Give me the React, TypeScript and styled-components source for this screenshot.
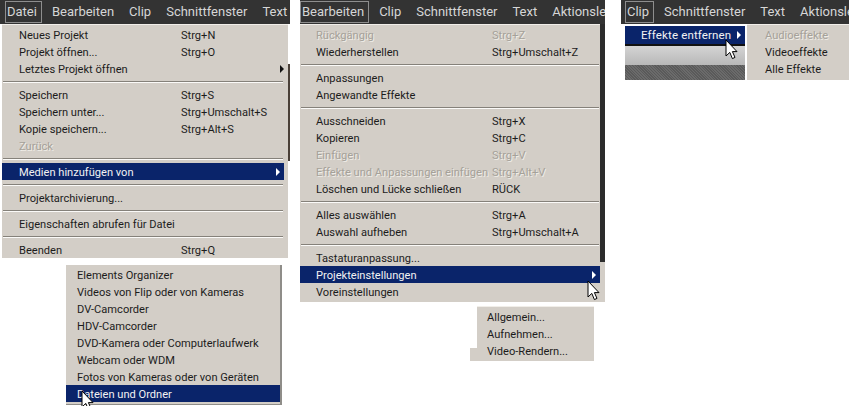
import React from "react";
import styled, { createGlobalStyle } from "styled-components";

const GlobalStyle = createGlobalStyle`
  html, body { margin: 0; padding: 0; background: #fff; }
`;

const MENU_BG = "#d3cec7";
const NAVY = "#0a246a";

const Canvas = styled.div`
  position: relative;
  width: 849px;
  height: 406px;
  overflow: hidden;
  background: #fff;
  font-family: Roboto, "Liberation Sans", sans-serif;
  font-size: 11.1px;
  color: #1c1c1c;
`;

// each cut-out of the original screenshot sits freely on the white page
const Shot = styled.div<{ $x: number; $y: number; $w: number; $open?: boolean }>`
  position: absolute;
  left: ${(p) => p.$x}px;
  top: ${(p) => p.$y}px;
  width: ${(p) => p.$w}px;
  overflow: ${(p) => (p.$open ? "visible" : "hidden")};
`;

const Bar = styled.div<{ $pad: number }>`
  display: flex;
  align-items: center;
  gap: 14px;
  height: 24px;
  padding-left: ${(p) => p.$pad}px;
  background: #333333;
  color: #d6d6d6;
  font-size: 13px;
  white-space: nowrap;
`;

const BarItem = styled.span<{ $active?: boolean }>`
  padding: 1px 4px 2px 1px;
  margin: 0 -5px 0 -1px;
  line-height: 17px;
  border: 1px solid ${(p) => (p.$active ? "#8e8e8e" : "transparent")};
`;

const Body = styled.div`
  display: flex;
  align-items: stretch;
`;

const Menu = styled.div<{ $w: number; $pad: number; $end?: number; $inset?: number }>`
  width: ${(p) => p.$w}px;
  flex: none;
  box-sizing: border-box;
  padding: 1px 0 ${(p) => p.$end ?? 2}px;
  background: ${MENU_BG};
  border-top: 1px solid #f1eee9;
  --label-pad: ${(p) => p.$pad}px;
  --row-inset: ${(p) => p.$inset ?? 0}px;
`;

const Row = styled.div<{ $active?: boolean; $disabled?: boolean }>`
  display: flex;
  align-items: center;
  box-sizing: border-box;
  height: 17px;
  padding-top: 1px;
  padding-left: var(--label-pad);
  margin-right: ${(p) => (p.$active ? "var(--row-inset)" : "0")};
  white-space: nowrap;
  background: ${(p) => (p.$active ? NAVY : "transparent")};
  color: ${(p) => (p.$active ? "#f2f2f2" : p.$disabled ? "#a5a199" : "#1c1c1c")};
  text-shadow: ${(p) => (p.$disabled ? "1px 1px 0 #efece6" : "none")};
`;

const Label = styled.span<{ $w: number }>`
  width: ${(p) => p.$w}px;
  flex: none;
`;

const Arrow = styled.i<{ $light?: boolean }>`
  margin-left: auto;
  margin-right: 4px;
  width: 0;
  height: 0;
  border-left: 4px solid ${(p) => (p.$light ? "#fff" : "#111")};
  border-top: 4px solid transparent;
  border-bottom: 4px solid transparent;
`;

const Separator = styled.div`
  height: 9px;
  margin-right: calc(var(--row-inset) + 1px);
  margin-left: 1px;
  box-sizing: border-box;
  padding-top: 4px;
  &::before {
    content: "";
    display: block;
    height: 1px;
    background: #85817a;
    border-bottom: 1px solid #fbfaf8;
  }
`;

const Gutter = styled.div`
  width: 2px;
  flex: none;
  background: #fff;
`;

// sliver of the application window that shows beside a menu
const WindowEdge = styled.div<{ $w: number; $from: number; $to: number; $dark: string; $rest: string }>`
  width: ${(p) => p.$w}px;
  flex: none;
  background: linear-gradient(
    ${(p) => p.$rest} ${(p) => p.$from}px,
    ${(p) => p.$dark} ${(p) => p.$from}px,
    ${(p) => p.$dark} ${(p) => p.$to}px,
    ${(p) => p.$rest} ${(p) => p.$to}px
  );
`;

const Shadowed = styled(Menu)`
  border-top: none;
  border-right: 2px solid #8f8d89;
  border-bottom: 1px solid #8f8d89;
  padding-top: 1px;
`;

const ClipColumn = styled.div`
  width: 124px;
  flex: none;
  display: flex;
  flex-direction: column;
  padding-left: 4px;
  background: #fff;
  box-sizing: border-box;
`;

const ClipRow = styled.div`
  display: flex;
  align-items: center;
  height: 18px;
  margin-top: 2px;
  padding-left: 16px;
  background: ${NAVY};
  color: #f2f2f2;
  font-size: 11.5px;
  letter-spacing: 0.15px;
  white-space: nowrap;
  border-bottom: 2px solid #111;
`;

const Fade = styled.div`
  height: 19px;
  background: linear-gradient(#d4d4d4, #b8b8b8);
`;

const Noise = styled.div`
  flex: 1;
  min-height: 15px;
  background: repeating-linear-gradient(45deg, #6b6b6b 0 1px, #5a5a5a 1px 2px);
`;

const SubmenuNotch = styled.div`
  position: absolute;
  left: -7px;
  bottom: 0;
  width: 7px;
  height: 13px;
  background: ${MENU_BG};
`;

const CursorSvg = styled.svg<{ $x: number; $y: number }>`
  position: absolute;
  left: ${(p) => p.$x}px;
  top: ${(p) => p.$y}px;
`;

const Cursor = ({ x, y }: { x: number; y: number }) => (
  <CursorSvg $x={x} $y={y} width="13" height="22" viewBox="0 0 13 22">
    <path
      d="M1 1 V17 L4.8 13.4 L7.4 19.6 L10 18.4 L7.4 12.6 H12 Z"
      fill="#fff"
      stroke="#000"
      strokeWidth="1"
    />
  </CursorSvg>
);

type Item =
  | "sep"
  | { t: string; k?: string; sub?: boolean; off?: boolean; on?: boolean };

const fileItems: Item[] = [
  { t: "Neues Projekt", k: "Strg+N" },
  { t: "Projekt öffnen...", k: "Strg+O" },
  { t: "Letztes Projekt öffnen", sub: true },
  "sep",
  { t: "Speichern", k: "Strg+S" },
  { t: "Speichern unter...", k: "Strg+Umschalt+S" },
  { t: "Kopie speichern...", k: "Strg+Alt+S" },
  { t: "Zurück", off: true },
  "sep",
  { t: "Medien hinzufügen von", sub: true, on: true },
  "sep",
  { t: "Projektarchivierung..." },
  "sep",
  { t: "Eigenschaften abrufen für Datei" },
  "sep",
  { t: "Beenden", k: "Strg+Q" },
];

const editItems: Item[] = [
  { t: "Rückgängig", k: "Strg+Z", off: true },
  { t: "Wiederherstellen", k: "Strg+Umschalt+Z" },
  "sep",
  { t: "Anpassungen" },
  { t: "Angewandte Effekte" },
  "sep",
  { t: "Ausschneiden", k: "Strg+X" },
  { t: "Kopieren", k: "Strg+C" },
  { t: "Einfügen", k: "Strg+V", off: true },
  { t: "Effekte und Anpassungen einfügen", k: "Strg+Alt+V", off: true },
  { t: "Löschen und Lücke schließen", k: "RÜCK" },
  "sep",
  { t: "Alles auswählen", k: "Strg+A" },
  { t: "Auswahl aufheben", k: "Strg+Umschalt+A" },
  "sep",
  { t: "Tastaturanpassung..." },
  { t: "Projekteinstellungen", sub: true, on: true },
  { t: "Voreinstellungen" },
];

const mediaItems: Item[] = [
  { t: "Elements Organizer" },
  { t: "Videos von Flip oder von Kameras" },
  { t: "DV-Camcorder" },
  { t: "HDV-Camcorder" },
  { t: "DVD-Kamera oder Computerlaufwerk" },
  { t: "Webcam oder WDM" },
  { t: "Fotos von Kameras oder von Geräten" },
  { t: "Dateien und Ordner", on: true },
];

const settingsItems: Item[] = [
  { t: "Allgemein..." },
  { t: "Aufnehmen..." },
  { t: "Video-Rendern..." },
];

const effectItems: Item[] = [
  { t: "Audioeffekte", off: true },
  { t: "Videoeffekte" },
  { t: "Alle Effekte" },
];

const Rows = ({ items, col }: { items: Item[]; col: number }) => (
  <>
    {items.map((item, i) =>
      item === "sep" ? (
        <Separator key={i} />
      ) : (
        <Row key={i} $active={item.on} $disabled={item.off}>
          <Label $w={col}>{item.t}</Label>
          {item.k && <span>{item.k}</span>}
          {item.sub && <Arrow $light={item.on} />}
        </Row>
      ),
    )}
  </>
);

const MenuBar = ({ pad, items, active }: { pad: number; items: string[]; active?: string }) => (
  <Bar $pad={pad}>
    {items.map((m) => (
      <BarItem key={m} $active={m === active}>
        {m}
      </BarItem>
    ))}
  </Bar>
);

export default function App() {
  return (
    <Canvas>
      <GlobalStyle />

      <Shot $x={0} $y={0} $w={290}>
        <MenuBar
          pad={6}
          active="Datei"
          items={["Datei", "Bearbeiten", "Clip", "Schnittfenster", "Text"]}
        />
        <Body>
          <Gutter />
          <Menu $w={286} $pad={17} $end={0} $inset={4}>
            <Rows items={fileItems} col={162} />
          </Menu>
          <WindowEdge $w={2} $from={40} $to={137} $dark="#4a4038" $rest="#fff" />
        </Body>
      </Shot>

      <Shot $x={66} $y={265} $w={216}>
        <Shadowed $w={216} $pad={11}>
          <Rows items={mediaItems} col={200} />
        </Shadowed>
      </Shot>
      <Cursor x={81} y={390} />

      <Shot $x={300} $y={0} $w={305}>
        <MenuBar
          pad={1}
          active="Bearbeiten"
          items={["Bearbeiten", "Clip", "Schnittfenster", "Text", "Aktionsleiste"]}
        />
        <Body>
          <Menu $w={300} $pad={16}>
            <Rows items={editItems} col={176} />
          </Menu>
          <WindowEdge $w={5} $from={0} $to={238} $dark="#2c2c2c" $rest={MENU_BG} />
        </Body>
      </Shot>
      <Cursor x={587} y={280} />

      <Shot $x={477} $y={306} $w={117} $open>
        <Menu $w={117} $pad={10}>
          <Rows items={settingsItems} col={100} />
        </Menu>
        <SubmenuNotch />
      </Shot>

      <Shot $x={621} $y={0} $w={228}>
        <MenuBar
          pad={5}
          active="Clip"
          items={["Clip", "Schnittfenster", "Text", "Aktionsleiste"]}
        />
        <Body>
          <ClipColumn>
            <ClipRow>
              Effekte entfernen
              <Arrow $light />
            </ClipRow>
            <Fade />
            <Noise />
          </ClipColumn>
          <Gutter />
          <Menu $w={102} $pad={18}>
            <Rows items={effectItems} col={84} />
          </Menu>
        </Body>
      </Shot>
      <Cursor x={725} y={39} />
    </Canvas>
  );
}
